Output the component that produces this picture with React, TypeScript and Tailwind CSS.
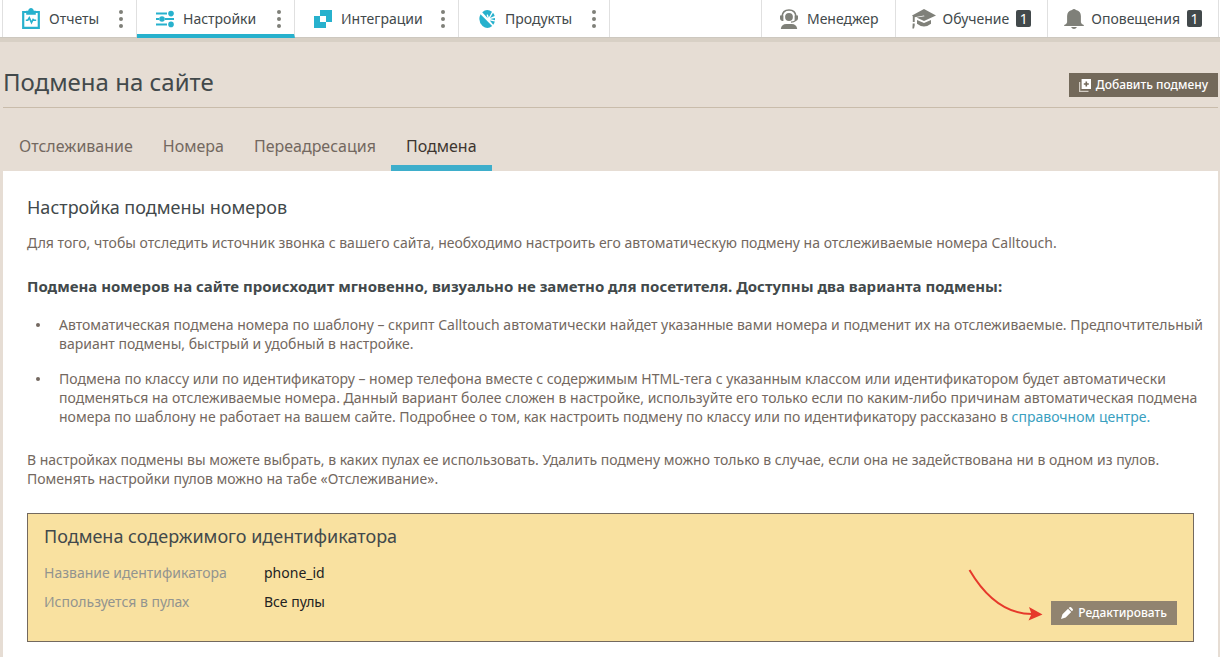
import type { ReactNode } from 'react';

function ReportsIcon() {
  return (
    <svg width="18" height="22" viewBox="0 0 18 22" aria-hidden="true">
      <path d="M1.200 4h15.600v15.800H1.200z" fill="none" stroke="#27b1cd" strokeWidth="2.200" />
      <path d="M4.200 6.800V2.800h2C6.600 1 7.600 0 9 0s2.400 1 2.800 2.800h2v4z" fill="#27b1cd" />
      <path d="M3.800 12.200h2l1.500-2.400 2.200 4.800 1.600-3.200 1 .8h2.100" fill="none" stroke="#27b1cd" strokeWidth="1.600" />
    </svg>
  );
}

function SettingsIcon() {
  return (
    <svg width="20" height="18" viewBox="0 0 20 18" fill="#27b1cd" aria-hidden="true">
      <path d="M1 2.600h11v2H1zM1 8h3v2H1zM10 8h9v2h-9zM1 13.400h11v2H1z" />
      <circle cx="16" cy="3.600" r="2.800" />
      <circle cx="7" cy="9" r="2.800" />
      <circle cx="16" cy="14.400" r="2.800" />
    </svg>
  );
}

function IntegrationsIcon() {
  return (
    <svg width="18" height="18" viewBox="0 0 18 18" aria-hidden="true">
      <path d="M6 0h12v12h-6v6H0V6h6z" fill="#27b1cd" />
      <path d="M6 6h6v6H6z" fill="#fff" />
    </svg>
  );
}

function ProductsIcon() {
  return (
    <svg width="16" height="18" viewBox="0 0 16 18" fill="#27b1cd" aria-hidden="true">
      <path d="M3.200 2.200Q8-1.800 13 1.800L9.800 7.600 8.900 4.400 7.600 4.800 8.700 8.300z" />
      <path d="M1.500 4.200 13.200 15.900Q8.500 19.800 3.500 16-1.600 11 1.500 4.200z" />
      <path d="M14 2.800q1.200 1.300 1.700 3.100L10.900 8zM11 9.100l5-1.200v2.300zM10.800 10.400l5 1.100q-.4 1.700-1.600 3.200z" />
    </svg>
  );
}

function ManagerIcon() {
  return (
    <svg width="22" height="20" viewBox="-1 0 22 20" fill="#7f8079" aria-hidden="true">
      <circle cx="10" cy="8" r="3.900" />
      <path d="M3 7.500C3.400 3.400 6.200 1 10 1s6.600 2.400 7 6.500" fill="none" stroke="#7f8079" strokeWidth="1.700" />
      <path d="M1 6.400h3.400v5.600H3Q1 11 1 9.400zM15.600 6.400H19v3q0 1.600-2 2.600-1.800 1.700-5 1.800v-1.400q2.400-.2 3.600-1z" />
      <path d="M1.800 20c.3-3.300 2.700-5 5.400-5h5.600c2.700 0 5.100 1.700 5.400 5z" />
    </svg>
  );
}

function EducationIcon() {
  return (
    <svg width="24" height="20" viewBox="0 0 24 20" fill="#7f8079" aria-hidden="true">
      <path d="M12 0 24 6.400 12 12 4.500 8.600 12.500 7.200 12 6.400 2.700 8.300V13H.8V7.200L0 6.400z" />
      <path d="M5 11v3.800Q12 20.400 19 14.800V11l-7 3zM.7 14.600h2v1.900L2 19.400H.4z" />
    </svg>
  );
}

function BellIcon() {
  return (
    <svg width="20" height="20" viewBox="0 0 20 20" fill="#7f8079" aria-hidden="true">
      <path d="M8 1q2-2 4 0 4.800 1.200 4.900 6v6.200q.4 1.900 2.900 2.900v1H.2v-1q2.500-1 2.900-2.900V7Q3.200 2.200 8 1zM7 18h6q-1.200 2-3 2t-3-2z" />
    </svg>
  );
}

function AddIcon() {
  return (
    <svg width="12" height="13" viewBox="0 0 12 13" aria-hidden="true">
      <path d="M.6 3v9.300H9.500" fill="none" stroke="#d3cdc4" strokeWidth="1.300" />
      <path d="M2.600 0H12v10H2.600z" fill="#fff" />
      <path d="M7.300 2.500v5M4.800 5h5" stroke="#73695a" strokeWidth="1.600" />
    </svg>
  );
}

function PencilIcon() {
  return (
    <svg width="12" height="12" viewBox="0 0 12 12" fill="#fff" aria-hidden="true">
      <path d="M1.500 7.300 7 1.800 10.200 5 4.700 10.500 0 12zM7.700 1.100 8.600.3q.8-.6 1.500 0L11.700 1.900q.6.800 0 1.500l-.8.9z" />
    </svg>
  );
}

function Dots() {
  return (
    <svg width="4" height="18" viewBox="0 0 4 18" fill="#7f8079" aria-hidden="true">
      <circle cx="2" cy="2" r="2" />
      <circle cx="2" cy="9" r="2" />
      <circle cx="2" cy="16" r="2" />
    </svg>
  );
}

type SectionProps = { icon: ReactNode; label: string; width: string; active?: boolean };

function Section({ icon, label, width, active }: SectionProps) {
  return (
    <li className={`flex items-center border-r border-[#e0e0e0] pr-[13px] pl-[18px] ${width} ${active ? '-mb-px h-[38px] border-b-4 border-b-[#27b1cd] pt-[3px]' : 'h-[37px]'}`}>
      <a href="#" className="flex items-center gap-2">
        <span className="flex w-5 justify-center">{icon}</span>
        {label}
      </a>
      <button type="button" aria-label={`Меню: ${label}`} className="ml-auto">
        <Dots />
      </button>
    </li>
  );
}

type ServiceProps = { icon: ReactNode; label: string; count?: number };

function Service({ icon, label, count }: ServiceProps) {
  return (
    <li className="flex h-[37px] border-l border-[#e0e0e0]">
      <a href="#" className="flex items-center gap-[7px] px-4">
        {icon}
        {label}
        {count !== undefined && (
          <span className="flex h-[17px] w-[15px] items-center justify-center rounded-[2px] bg-[#42494b] text-sm text-white">{count}</span>
        )}
      </a>
    </li>
  );
}

function Bullet({ children }: { children: ReactNode }) {
  return (
    <li className="flex gap-[19px]">
      <span className="mt-2 h-1 w-1 shrink-0 rounded-full bg-[#736860]" />
      <p>{children}</p>
    </li>
  );
}

const tabs = ['Отслеживание', 'Номера', 'Переадресация', 'Подмена'];

export default function App() {
  return (
    <div className="min-h-screen bg-[#e6ddd4] pr-[2px] pl-[3px] font-['Noto_Sans','Open_Sans',sans-serif] text-sm leading-[19px] text-[#736860]">
      <header className="-mr-[2px] -ml-[3px] border-b-4 border-[#d8d0c5] bg-white text-[#42494b]">
        <nav className="flex items-start justify-between border-b border-[#cdc8bf] pr-px pl-[2px]">
          <ul className="flex border-l border-[#e0e0e0]">
            <Section icon={<ReportsIcon />} label="Отчеты" width="w-[134px]" />
            <Section icon={<SettingsIcon />} label="Настройки" width="w-[158px]" active />
            <Section icon={<IntegrationsIcon />} label="Интеграции" width="w-[164px]" />
            <Section icon={<ProductsIcon />} label="Продукты" width="w-[151px]" />
          </ul>
          <ul className="flex border-r border-[#e0e0e0]">
            <Service icon={<ManagerIcon />} label="Менеджер" />
            <Service icon={<EducationIcon />} label="Обучение" count={1} />
            <Service icon={<BellIcon />} label="Оповещения" count={1} />
          </ul>
        </nav>
      </header>

      <div className="flex h-[66px] items-end justify-between border-b border-[#c9bcab] pb-[10px]">
        <h1 className="text-2xl leading-[30px] text-[#42494b]">Подмена на сайте</h1>
        <button type="button" className="flex h-6 items-center gap-[5px] bg-[#73695a] px-[10px] text-xs font-medium text-white">
          <AddIcon />
          Добавить подмену
        </button>
      </div>

      <nav className="flex h-[63px] items-end pl-px text-base">
        {tabs.map((tab) => (
          <a
            key={tab}
            href="#"
            className={`border-b-[6px] px-[15px] pb-[7px] leading-6 ${tab === 'Подмена' ? 'border-[#3eaecb] text-[#3d3530]' : 'border-transparent'}`}
          >
            {tab}
          </a>
        ))}
      </nav>

      <main className="bg-white px-6 pt-6 pb-[15px]">
        <h2 className="text-lg leading-6 text-[#42494b]">Настройка подмены номеров</h2>
        <p className="mt-[14px]">
          Для того, чтобы отследить источник звонка с вашего сайта, необходимо настроить его автоматическую подмену на отслеживаемые номера Calltouch.
        </p>
        <p className="mt-[25px] text-[15px] font-bold text-[#42494b]">
          Подмена номеров на сайте происходит мгновенно, визуально не заметно для посетителя. Доступны два варианта подмены:
        </p>
        <ul className="mt-[19px] flex flex-col gap-4 pl-[9px] lg:whitespace-nowrap">
          <Bullet>
            Автоматическая подмена номера по шаблону – скрипт Calltouch автоматически найдет указанные вами номера и подменит их на отслеживаемые. Предпочтительный
            <br />
            вариант подмены, быстрый и удобный в настройке.
          </Bullet>
          <Bullet>
            Подмена по классу или по идентификатору – номер телефона вместе с содержимым HTML-тега с указанным классом или идентификатором будет автоматически
            <br />
            подменяться на отслеживаемые номера. Данный вариант более сложен в настройке, используйте его только если по каким-либо причинам автоматическая подмена
            <br />
            номера по шаблону не работает на вашем сайте. Подробнее о том, как настроить подмену по классу или по идентификатору рассказано в{' '}
            <a href="#" className="text-[#3aa0bf]">справочном центре.</a>
          </Bullet>
        </ul>
        <p className="mt-6">
          В настройках подмены вы можете выбрать, в каких пулах ее использовать. Удалить подмену можно только в случае, если она не задействована ни в одном из пулов.
          <br />
          Поменять настройки пулов можно на табе «Отслеживание».
        </p>

        <section className="mt-[25px] flex items-end justify-between border border-[#73695f] bg-[#f9e1a0] px-4 pt-[10px] pb-4">
          <div className="pb-[14px]">
            <h3 className="text-lg leading-6 text-[#42494b]">Подмена содержимого идентификатора</h3>
            <dl className="mt-[15px] grid grid-cols-[220px_auto] gap-y-[10px]">
              <dt className="text-[#92948f]">Название идентификатора</dt>
              <dd className="text-[#222]">phone_id</dd>
              <dt className="text-[#92948f]">Используется в пулах</dt>
              <dd className="text-[#222]">Все пулы</dd>
            </dl>
          </div>
          <div className="flex items-end gap-2">
            <svg width="75" height="56" viewBox="0 0 75 56" aria-hidden="true">
              <path d="M1.500 1C18 29 38 45 64 45" fill="none" stroke="#e6392b" strokeWidth="2" />
              <path d="M61 38 74.500 45.500 60.500 51.500 63.500 45z" fill="#e6392b" />
            </svg>
            <button type="button" className="flex h-6 items-center gap-[5px] bg-[#918470] px-[10px] text-xs font-medium text-white">
              <PencilIcon />
              Редактировать
            </button>
          </div>
        </section>
      </main>
    </div>
  );
}
